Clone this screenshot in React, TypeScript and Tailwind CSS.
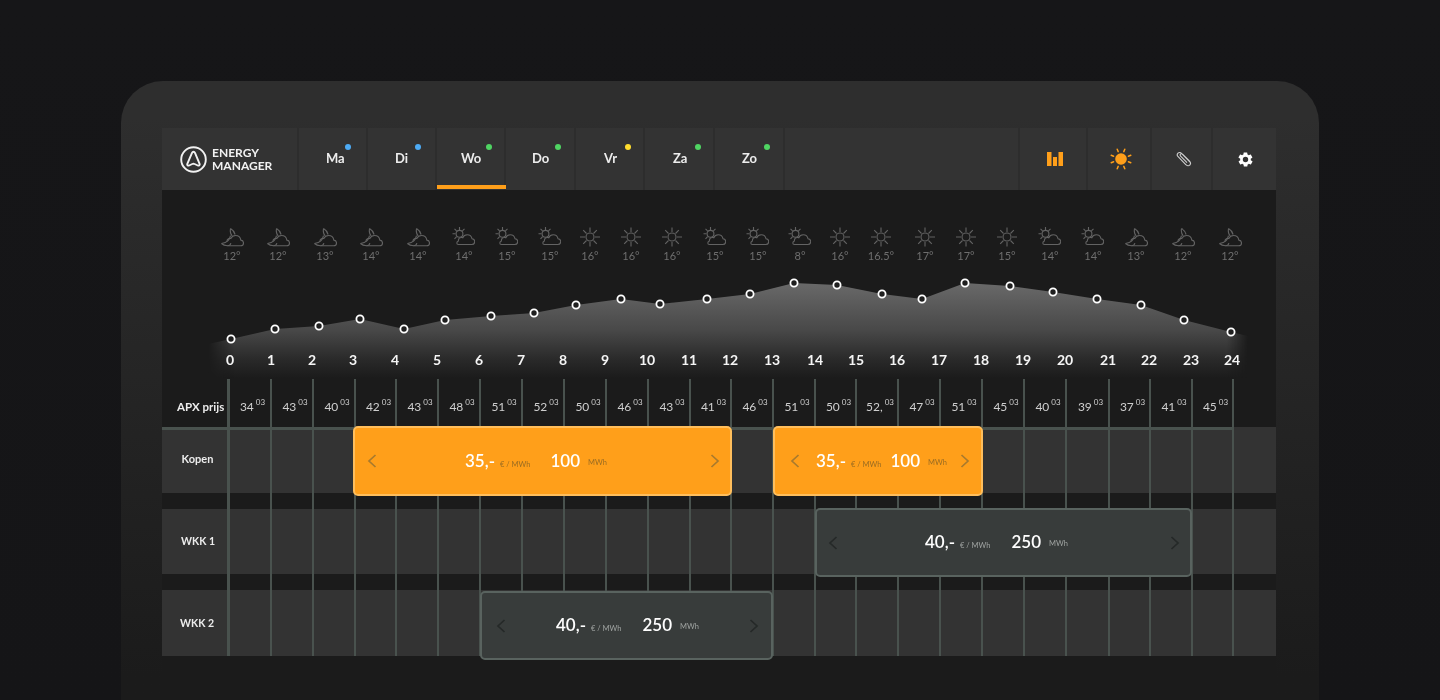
import React from "react";

const FONT = "font-['Lato','Open_Sans',sans-serif]";

const days = [
  { label: "Ma", dot: "bg-[#4dabf5] right-[15px]", w: "w-[69px] pl-[5px]", active: false },
  { label: "Di", dot: "bg-[#4dabf5] right-[14px]", w: "w-[69px] pl-[1px]", active: false },
  { label: "Wo", dot: "bg-[#4fd562] right-[12px]", w: "w-[69px] pl-[2px]", active: true },
  { label: "Do", dot: "bg-[#4fd562] right-[13px]", w: "w-[70px] pl-[2px]", active: false },
  { label: "Vr", dot: "bg-[#ffdd2e] right-[12px]", w: "w-[69px] pl-[3px]", active: false },
  { label: "Za", dot: "bg-[#4fd562] right-[12px]", w: "w-[70px] pl-[3px]", active: false },
  { label: "Zo", dot: "bg-[#4fd562] right-[13px]", w: "w-[70px] pl-[2px]", active: false },
];

type Kind = "moon" | "partly" | "sun";
const weather: { x: number; kind: Kind; t: string }[] = [
  { x: 232, kind: "moon", t: "12°" },
  { x: 278, kind: "moon", t: "12°" },
  { x: 325, kind: "moon", t: "13°" },
  { x: 371, kind: "moon", t: "14°" },
  { x: 418, kind: "moon", t: "14°" },
  { x: 464, kind: "partly", t: "14°" },
  { x: 507, kind: "partly", t: "15°" },
  { x: 550, kind: "partly", t: "15°" },
  { x: 590, kind: "sun", t: "16°" },
  { x: 631, kind: "sun", t: "16°" },
  { x: 672, kind: "sun", t: "16°" },
  { x: 715, kind: "partly", t: "15°" },
  { x: 758, kind: "partly", t: "15°" },
  { x: 800, kind: "partly", t: "8°" },
  { x: 840, kind: "sun", t: "16°" },
  { x: 881, kind: "sun", t: "16.5°" },
  { x: 925, kind: "sun", t: "17°" },
  { x: 966, kind: "sun", t: "17°" },
  { x: 1007, kind: "sun", t: "15°" },
  { x: 1050, kind: "partly", t: "14°" },
  { x: 1093, kind: "partly", t: "14°" },
  { x: 1136, kind: "moon", t: "13°" },
  { x: 1183, kind: "moon", t: "12°" },
  { x: 1230, kind: "moon", t: "12°" },
];

const points: [number, number][] = [
  [231, 339], [275, 329], [319, 326], [360, 319], [404, 329], [445, 320], [491, 316], [534, 313],
  [576, 305], [621, 299], [660, 304], [707, 299], [750, 294], [794, 283], [837, 285], [882, 294],
  [922, 299], [965, 283], [1010, 286], [1053, 292], [1097, 299], [1141, 305], [1184, 320], [1231, 332],
];

const hours = [230, 271, 312, 353, 395, 437, 479, 521, 563, 605, 647, 689, 730, 772, 815, 856, 897, 939, 981, 1023, 1065, 1108, 1149, 1191, 1232];

const lines = [228, 271, 313, 355, 396, 438, 480, 522, 564, 606, 648, 690, 731, 773, 815, 856, 898, 940, 982, 1024, 1066, 1109, 1150, 1192, 1233];

const prices = ["34", "43", "40", "42", "43", "48", "51", "52", "50", "46", "43", "41", "46", "51", "50", "52,", "47", "51", "45", "40", "39", "37", "41", "45"];

function WeatherIcon({ kind }: { kind: Kind }) {
  const s = "#636363";
  if (kind === "sun") {
    return (
      <svg width="24" height="24" viewBox="0 0 24 24" fill="none" stroke={s} strokeWidth="1.1">
        <circle cx="12" cy="12" r="4" />
        <path d="M12 2.500v4.500M12 17v4.500M2 12h5M17 12h5M5.200 5.200l3.300 3.300M15.500 15.500l3.300 3.300M5.200 18.800l3.300-3.300M15.500 8.500l3.300-3.300" />
      </svg>
    );
  }
  if (kind === "moon") {
    return (
      <svg width="24" height="24" viewBox="0 0 24 24" fill="none" stroke={s} strokeWidth="1.1">
        <path d="M10.500 3.500c-.6 3.200.2 5.600 1.700 7.300M10.500 3.500c2.400 1.400 4 3.600 4.600 6" />
        <path d="M1.500 18.500c2.700-.3 5-1.200 6.600-2.800 1.200-1.200 1.900-2.800 2.400-5" />
        <path d="M7.500 20.700h13.200c1.600 0 2.800-1.200 2.800-2.800 0-1.500-1.200-2.700-2.700-2.800-.4-2.600-2.400-4.600-5.200-4.600-2.200 0-4 1.300-4.800 3.100-.8-.3-1.800-.2-2.400.2-1 .6-1.500 1.600-1.500 2.600" />
        <path d="M1.500 18.500c1.600 1.600 3.600 2.200 6 2.200 1.800 0 3-.9 3.400-2.600" />
      </svg>
    );
  }
  return (
    <svg width="24" height="24" viewBox="0 0 24 24" fill="none" stroke={s} strokeWidth="1.1" className="-ml-[3px]">
      <circle cx="8.500" cy="8.800" r="3.400" />
      <path d="M8.500 2v3M1.500 8.800h3M3.500 3.800l2.100 2.100M13.500 3.800l-2.100 2.100M3.500 13.800l2.100-2.100" />
      <path fill="#1b1b1b" d="M9.200 19.500h11.600c1.600 0 2.900-1.300 2.900-2.900 0-1.500-1.200-2.800-2.700-2.900-.5-2.300-2.400-3.900-4.800-3.900-2 0-3.700 1.200-4.400 2.900-.6-.3-1.400-.4-2-.2-1.400.3-2.400 1.500-2.400 3 0 .2 0 .3 0 .5-1 .4-1.600 1.200-1.600 2.100 0 .9.800 1.400 1.600 1.400h1.800z" />
    </svg>
  );
}

function Chevron({ dir, tone }: { dir: "l" | "r"; tone: string }) {
  return (
    <svg width="10" height="14" viewBox="0 0 10 14" fill="none" stroke={tone} strokeWidth="1.700">
      <path d={dir === "l" ? "M8.500 1L2 7l6.500 6" : "M1.500 1L8 7l-6.500 6"} />
    </svg>
  );
}

function Block({ price, amount, gap, orange, pos, shift }: { price: string; amount: string; gap: string; orange?: boolean; pos: string; shift: string }) {
  const tone = orange ? "#a87a2e" : "#252928";
  return (
    <div
      className={`absolute z-10 flex items-center justify-between rounded-[5px] border-2 ${pos} ${
        orange ? "border-[#ffbe5c] bg-[#ff9f1a]" : "border-[#59635f] bg-[#383c3b]"
      }`}
    >
      <Chevron dir="l" tone={tone} />
      <div className={`relative top-[-1px] flex items-baseline will-change-transform ${gap} ${shift}`}>
        <div className="flex items-baseline gap-[5px]">
          <span className="text-[17px] leading-none font-semibold text-white">{price}</span>
          <span className={`text-[7.5px] leading-none ${orange ? "text-[#9a6c22]" : "text-[#a0a4a2]"}`}>€ / MWh</span>
        </div>
        <div className="flex items-baseline gap-[8px]">
          <span className="text-[17px] leading-none font-semibold text-white">{amount}</span>
          <span className={`relative top-[-2px] text-[7.5px] leading-none ${orange ? "text-[#9a6c22]" : "text-[#a0a4a2]"}`}>MWh</span>
        </div>
      </div>
      <Chevron dir="r" tone={tone} />
    </div>
  );
}

export default function App() {
  const line = points.map((p) => p.join(",")).join(" ");
  return (
    <div className={`h-[700px] w-[1440px] overflow-hidden bg-gradient-to-b from-[#161618] to-[#151517] pt-[81px] ${FONT}`}>
      <div className="mx-[121px] h-[700px] rounded-t-[42px] bg-gradient-to-b from-[#2e2e2e] from-[5%] to-[#1b1b1b] to-[85%] pt-[47px] pr-[43px] pl-[41px]">
        <div className="h-[600px] bg-[#1b1b1b]">
          {/* Header */}
          <div className="flex h-[62px] bg-[#333333]">
            <div className="flex w-[137px] items-center gap-[5px] border-r-2 border-[#2d2d2d] pl-[18px]">
              <svg width="27" height="27" viewBox="0 0 27 27" fill="none" stroke="#f2f2f2" strokeWidth="1.900">
                <circle cx="13.500" cy="13.500" r="12.300" />
                <path d="M13.500 5.800c.7 0 1.200.4 1.500 1l4.600 11c.5 1.200-.7 2.200-1.800 1.700l-3.200-1.500c-.7-.3-1.600-.3-2.300 0l-3.200 1.500c-1.100.5-2.300-.5-1.800-1.700L12 6.800c.3-.6.800-1 1.500-1z" strokeLinejoin="round" />
              </svg>
              <div className="text-[12px] leading-[13px] font-bold text-[#f2f2f2] will-change-transform">
                ENERGY
                <br />
                MANAGER
              </div>
            </div>
            {days.map((d) => (
              <div key={d.label} className={`relative flex items-center justify-center border-r-2 border-[#2d2d2d] ${d.w}`}>
                <span className="text-[13px] font-bold text-[#ededed] will-change-transform">{d.label}</span>
                <span className={`absolute top-[16px] h-[6px] w-[6px] rounded-full ${d.dot}`} />
                {d.active && <span className="absolute right-[-2px] bottom-[1px] left-0 h-[4px] bg-[#ff9f1a]" />}
              </div>
            ))}
            <div className="flex-1 border-r-2 border-[#2d2d2d]" />
            <div className="flex w-[68px] items-center justify-center border-r-2 border-[#2d2d2d] pl-[4px]">
              <svg width="16" height="14" viewBox="0 0 16 14" fill="#ff9f1a">
                <rect x="0" y="0" width="4.500" height="14" />
                <rect x="6" y="5" width="4" height="9" />
                <rect x="11.500" y="0" width="4.500" height="14" />
              </svg>
            </div>
            <div className="flex w-[64px] items-center justify-center border-r-2 border-[#2d2d2d] pl-[3px]">
              <svg width="22" height="22" viewBox="0 0 22 22" fill="#ff9f1a" stroke="#ff9f1a" strokeWidth="1.500" strokeLinecap="round">
                <circle cx="11" cy="11" r="5.800" stroke="none" />
                <path d="M7.200 1.200l1 2.400M14.800 1.200l-1 2.400M1.200 7.200l2.400 1M20.800 7.200l-2.400 1M1.200 14.800l2.400-1M20.800 14.800l-2.400-1M7.200 20.800l1-2.400M14.800 20.800l-1-2.400" fill="none" />
              </svg>
            </div>
            <div className="flex w-[61px] items-center justify-center border-r-2 border-[#2d2d2d] pl-[4px]">
              <svg width="16" height="16" viewBox="0 0 16 16" fill="none" stroke="#cfcfcf" strokeWidth="1.100">
                <path d="M14.500 11.500L5.500 2.300C4.500 1.300 3 1.200 2 2.200c-1 1-.9 2.500.1 3.500l7.700 8c1.300 1.300 3 1.400 4 .3 1-1 .8-2.700-.5-4L6.500 3.200c-.6-.6-1.500-.7-2-.1-.6.500-.5 1.400.1 2L11 11.700" />
              </svg>
            </div>
            <div className="flex w-[63px] items-center justify-center pl-[2px]">
              <svg width="17" height="17" viewBox="0 0 24 24" fill="#ffffff" fillRule="evenodd">
                <path d="M19.400 13c.1-.3.100-.7.100-1s0-.7-.1-1l2.100-1.600c.2-.1.200-.4.100-.6l-2-3.500c-.1-.2-.4-.3-.6-.2l-2.500 1c-.5-.4-1.100-.7-1.700-1l-.4-2.600c0-.3-.2-.5-.5-.5h-4c-.3 0-.5.200-.5.500l-.4 2.600c-.6.300-1.200.6-1.700 1l-2.500-1c-.2-.1-.5 0-.6.200l-2 3.500c-.1.200-.1.500.1.600L4.600 11c-.1.300-.1.700-.1 1s0 .7.100 1l-2.100 1.600c-.2.100-.2.400-.1.600l2 3.500c.1.200.4.300.6.200l2.500-1c.5.400 1.100.7 1.700 1l.4 2.600c0 .3.200.5.500.5h4c.3 0 .5-.2.500-.5l.4-2.600c.6-.3 1.200-.6 1.700-1l2.500 1c.2.100.5 0 .6-.2l2-3.500c.1-.2.100-.5-.1-.6L19.400 13zM12 15.800a3.800 3.800 0 1 1 0-7.600 3.800 3.800 0 0 1 0 7.600z" />
              </svg>
            </div>
          </div>

          {/* Weather strip */}
          <div className="relative h-[80px] will-change-transform">
            {weather.map((w, i) => (
              <div key={i} className="absolute top-[35px] flex w-[40px] flex-col items-center" style={{ left: w.x - 162 - 20 }}>
                <WeatherIcon kind={w.kind} />
                <span className="mt-[1px] text-[11px] leading-[12px] text-[#6e6e6e]">{w.t}</span>
              </div>
            ))}
          </div>

          {/* Temperature chart */}
          <svg width="1114" height="109" viewBox="162 270 1114 109" className="block will-change-transform">
            <defs>
              <linearGradient id="fillV" gradientUnits="userSpaceOnUse" x1="0" y1="283" x2="0" y2="378">
                <stop offset="0" stopColor="#696969" />
                <stop offset="0.5" stopColor="#484848" />
                <stop offset="0.8" stopColor="#2a2a2a" />
                <stop offset="1" stopColor="#1b1b1b" />
              </linearGradient>
              <linearGradient id="fadeH" gradientUnits="userSpaceOnUse" x1="208" y1="0" x2="1248" y2="0">
                <stop offset="0" stopColor="#000" />
                <stop offset="0.025" stopColor="#fff" />
                <stop offset="0.98" stopColor="#fff" />
                <stop offset="1" stopColor="#000" />
              </linearGradient>
              <mask id="fadeMask" maskUnits="userSpaceOnUse" x="162" y="270" width="1114" height="109">
                <rect x="162" y="270" width="1114" height="109" fill="url(#fadeH)" />
              </mask>
            </defs>
            <polygon points={`208,344 ${line} 1248,336 1248,378 208,378`} fill="url(#fillV)" mask="url(#fadeMask)" />
            {points.map(([x, y], i) => (
              <circle key={i} cx={x} cy={y} r="3.600" fill="#1f1f1f" stroke="#ffffff" strokeWidth="1.800" />
            ))}
            {hours.map((x, i) => (
              <text key={i} x={x} y="365" textAnchor="middle" fontSize="14" fontWeight="700" fill="#f5f5f5">
                {i}
              </text>
            ))}
          </svg>

          {/* Schedule */}
          <div className="relative">
            {lines.map((x, i) => (
              <div
                key={x}
                className={`absolute top-0 bottom-0 bg-[#49524e] ${i === 0 ? "w-[3px]" : "w-[2px]"}`}
                style={{ left: x - 162 - 1 }}
              />
            ))}
            <div className="absolute top-[48px] left-0 h-[3px] w-[1071px] bg-[#49524e]" />

            <div className="flex h-[48px] items-center pt-[8px] will-change-transform">
              <div className="w-[66px] pl-[15px] text-[11.5px] font-bold text-[#ececec]">APX prijs</div>
              <div className="flex flex-1">
                {prices.map((p, i) => (
                  <div key={i} className="flex justify-center pl-[6px] text-[#cfcfcf]" style={{ width: lines[i + 1] - lines[i] }}>
                    <span className="text-[12px] leading-none">{p}</span>
                    <span className="relative top-[-3px] ml-[2px] text-[8px] leading-none">03</span>
                  </div>
                ))}
              </div>
            </div>

            <div className="flex h-[66px] items-center bg-[#333333] pb-[2px]">
              <span className="w-[71px] text-center text-[11px] font-bold text-[#ececec] will-change-transform">Kopen</span>
            </div>
            <div className="mt-[16px] flex h-[65px] items-center bg-[#333333]">
              <span className="w-[72px] text-center text-[10.500px] font-bold text-[#ececec] will-change-transform">WKK 1</span>
            </div>
            <div className="mt-[16px] flex h-[66px] items-center bg-[#333333] pt-[1px]">
              <span className="w-[70px] text-center text-[10.500px] font-bold text-[#ececec] will-change-transform">WKK 2</span>
            </div>

            <Block pos="top-[47px] left-[191px] h-[70px] w-[379px] pr-[10px] pl-[12px]" price="35,-" amount="100" gap="gap-[20px]" shift="left-[-8px]" orange />
            <Block pos="top-[47px] left-[611px] h-[70px] w-[210px] pr-[11px] pl-[15px]" price="35,-" amount="100" gap="gap-[9px]" shift="left-[1px]" orange />
            <Block pos="top-[129px] left-[653px] h-[69px] w-[377px] pr-[10px] pl-[11px]" price="40,-" amount="250" gap="gap-[21px]" shift="left-[-8px]" />
            <Block pos="top-[212px] left-[318px] h-[69px] w-[293px] pr-[12px] pl-[14px]" price="40,-" amount="250" gap="gap-[21px]" shift="left-[0px]" />
          </div>
        </div>
      </div>
    </div>
  );
}
